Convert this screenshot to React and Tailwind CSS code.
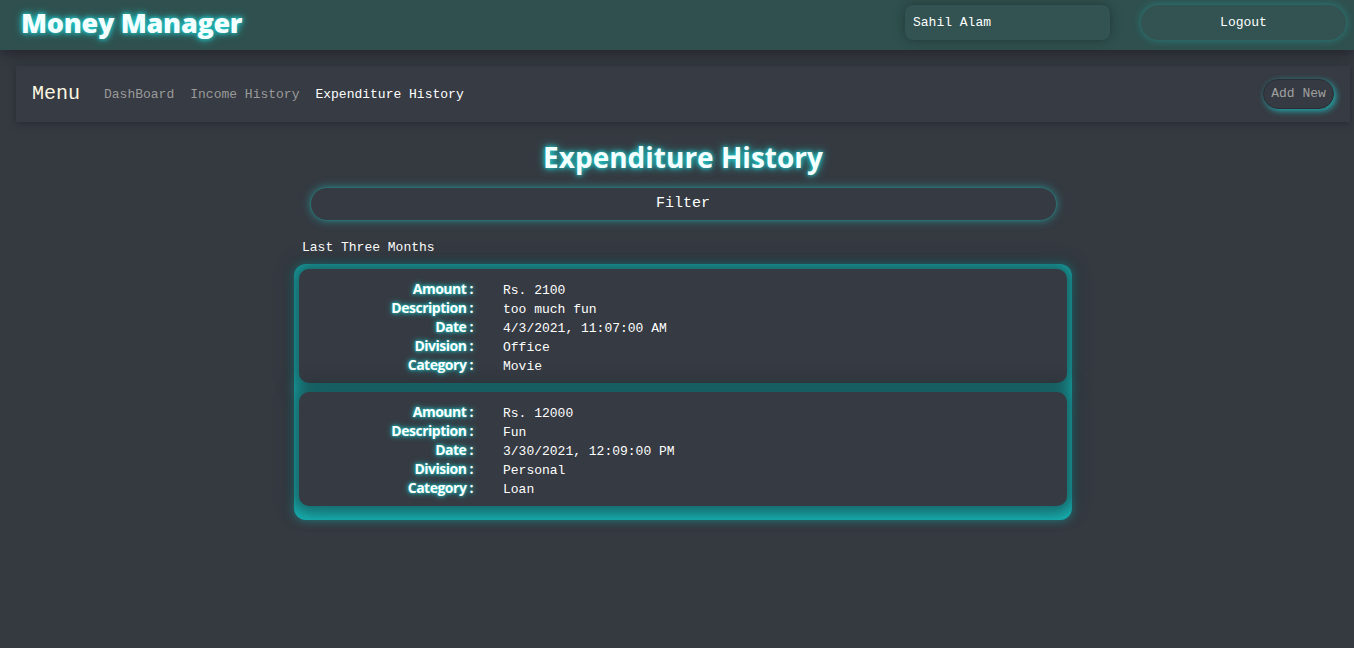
import React from 'react';

const mono = { fontFamily: '"Liberation Mono", "Courier New", monospace' };
const heading = { fontFamily: '"Open Sans", "Segoe UI", sans-serif' };

const entries = [
  { amount: 'Rs. 2100', description: 'too much fun', date: '4/3/2021, 11:07:00 AM', division: 'Office', category: 'Movie' },
  { amount: 'Rs. 12000', description: 'Fun', date: '3/30/2021, 12:09:00 PM', division: 'Personal', category: 'Loan' },
];

function Row({ label, value }) {
  return (
    <div className="flex items-baseline h-[19px]">
      <span
        className="w-[174px] text-right text-[14px] font-bold text-white tracking-[-0.5px] [text-shadow:0_0_6px_#1ec8c8,0_0_3px_#1ec8c8]"
        style={heading}
      >
        {label} :
      </span>
      <span className="ml-[30px] text-[13px] text-white" style={mono}>{value}</span>
    </div>
  );
}

export default function App() {
  return (
    <div className="min-h-[648px] bg-[#353a41] text-white">
      {/* Top bar */}
      <header className="h-[50px] bg-[#2f504e] flex items-start pl-[21px] pr-[8px] shadow-[0_4px_14px_rgba(0,0,0,0.35)] relative z-10">
        <h1
          className="mt-[5px] text-[27px] leading-[36px] font-extrabold text-[#f4ffff] tracking-[-0.3px] [text-shadow:0_0_8px_#20d0d0,0_0_4px_#20d0d0]"
          style={heading}
        >
          Money Manager
        </h1>
        <div className="ml-auto mt-[5px] flex items-center gap-[31px]">
          <div className="w-[205px] h-[35px] rounded-lg bg-[#325351] shadow-[0_0_12px_rgba(0,0,0,0.3)] flex items-center px-[8px] text-[13px]" style={mono}>
            Sahil Alam
          </div>
          <button className="w-[205px] h-[35px] rounded-full bg-[#325351] shadow-[0_0_8px_rgba(30,190,190,0.45)] text-[13px] text-white" style={mono}>
            Logout
          </button>
        </div>
      </header>

      <div className="pt-[16px] pl-[16px] pr-[4px]">
        {/* Menu bar */}
        <nav className="h-[56px] bg-[#373b43] shadow-[0_2px_8px_rgba(0,0,0,0.25)] flex items-center pl-[16px] pr-[16px]" style={mono}>
          <span className="text-[20px] text-[#fbf6e0]">Menu</span>
          <div className="flex items-center gap-[16px] ml-[24px] text-[13px] mt-[2px]">
            <span className="text-[#9a9a9a]">DashBoard</span>
            <span className="text-[#9a9a9a]">Income History</span>
            <span className="text-white">Expenditure History</span>
          </div>
          <button className="ml-auto w-[71px] h-[30px] rounded-full bg-[#363a42] text-[13px] text-[#a0a0a0] shadow-[2px_2px_6px_rgba(25,200,200,0.8)] border border-[#2a2e34]">
            Add New
          </button>
        </nav>

        {/* Content */}
        <main className="flex flex-col items-center">
          <h2
            className="mt-[17px] text-[28px] font-bold text-[#f4ffff] leading-[37px] [text-shadow:0_0_8px_#20d0d0,0_0_4px_#20d0d0]"
            style={heading}
          >
            Expenditure History
          </h2>
          <button
            className="mt-[11px] w-[747px] h-[34px] rounded-full bg-[#363a42] border border-[#2c6e6e] shadow-[0_0_8px_rgba(30,190,190,0.55)] text-[15px] text-white"
            style={mono}
          >
            Filter
          </button>
          <div className="w-[778px] mt-[17px] text-[13px] pl-[8px]" style={mono}>Last Three Months</div>
          <div className="w-[778px] mt-[6px] rounded-[12px] bg-[#16b8b8] p-[5px] flex flex-col gap-[9px] pb-[14px] shadow-[0_0_10px_rgba(20,190,190,0.6)]">
            {entries.map((e, i) => (
              <div
                key={i}
                className="bg-[#363a42] rounded-[10px] h-[114px] pt-[9px] shadow-[0_0_16px_8px_rgba(25,45,50,0.6)]"
              >
                <Row label="Amount" value={e.amount} />
                <Row label="Description" value={e.description} />
                <Row label="Date" value={e.date} />
                <Row label="Division" value={e.division} />
                <Row label="Category" value={e.category} />
              </div>
            ))}
          </div>
        </main>
      </div>
    </div>
  );
}
